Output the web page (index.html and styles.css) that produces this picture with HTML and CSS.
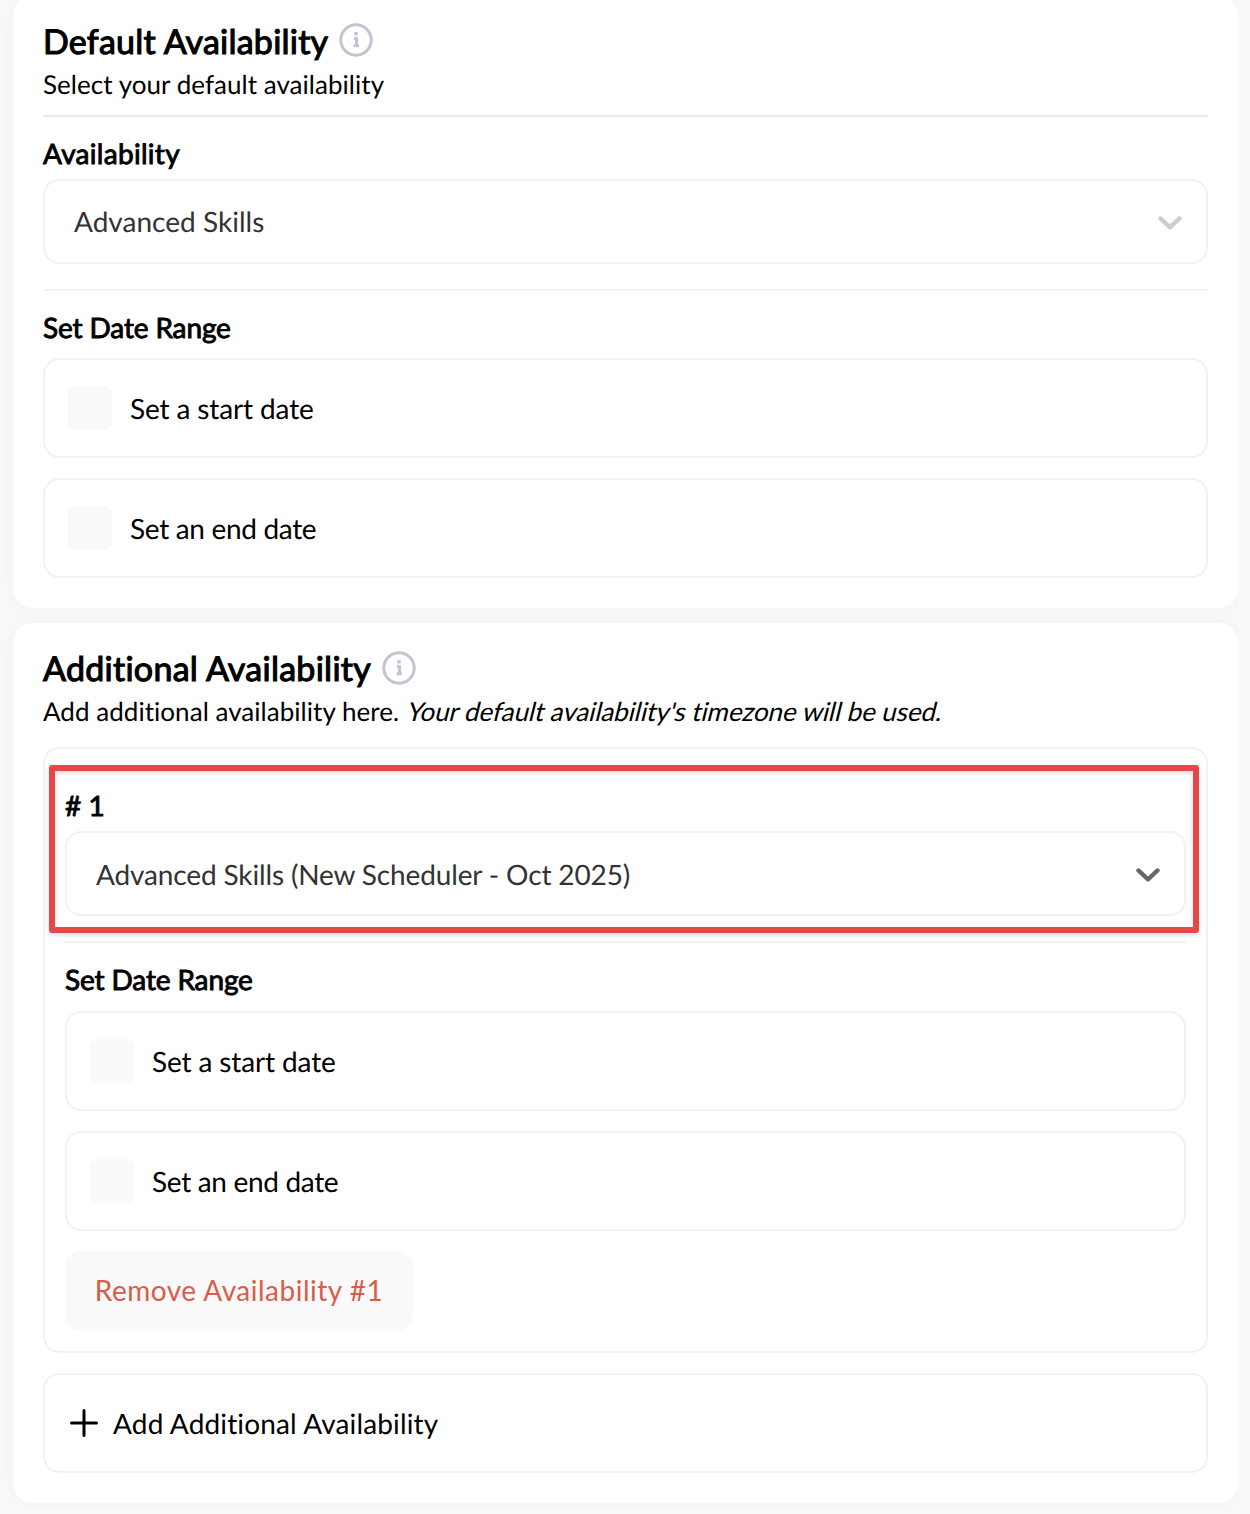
FILE: index.html
```html
<!DOCTYPE html>
<html lang="en">
<head>
<meta charset="utf-8">
<title>Availability</title>
<link rel="stylesheet" href="styles.css">
</head>
<body>
<main class="page">
  <section class="card card-default">
    <header class="card-head">
      <h2 class="title">Default Availability</h2>
      <svg class="info" viewBox="0 0 34 34"><circle cx="17" cy="17" r="15.2"/><path d="M14.9 15.4h2.7v7.2M14.6 22.7h5.4"/><circle class="dot" cx="17" cy="10.7" r="2"/></svg>
    </header>
    <p class="subtitle">Select your default availability</p>
    <hr class="rule rule-head">
    <h3 class="label label-first">Availability</h3>
    <div class="select select-default">
      <span>Advanced Skills</span>
      <svg class="chevron chevron-muted" viewBox="0 0 24 14"><path d="M2.4 2.4 12 11.4l9.6-9"/></svg>
    </div>
    <hr class="rule">
    <h3 class="label label-range">Set Date Range</h3>
    <div class="options">
      <label class="option option-start"><span class="box"></span>Set a start date</label>
      <label class="option"><span class="box"></span>Set an end date</label>
    </div>
  </section>

  <section class="card">
    <header class="card-head card-head-additional">
      <h2 class="title">Additional Availability</h2>
      <svg class="info" viewBox="0 0 34 34"><circle cx="17" cy="17" r="15.2"/><path d="M14.9 15.4h2.7v7.2M14.6 22.7h5.4"/><circle class="dot" cx="17" cy="10.7" r="2"/></svg>
    </header>
    <p class="subtitle">Add additional availability here. <em class="note">Your default availability's timezone will be used.</em></p>
    <div class="entry">
      <div class="highlight"></div>
      <h3 class="label">#&nbsp;1</h3>
      <div class="select">
        <span>Advanced Skills (New Scheduler - Oct 2025)</span>
        <svg class="chevron" viewBox="0 0 24 14"><path d="M2.4 2.4 12 11.4l9.6-9"/></svg>
      </div>
      <hr class="rule">
      <h3 class="label label-range">Set Date Range</h3>
      <div class="options">
        <label class="option option-start"><span class="box"></span>Set a start date</label>
        <label class="option"><span class="box"></span>Set an end date</label>
      </div>
      <button class="remove">Remove Availability #1</button>
    </div>
    <div class="add">
      <svg class="plus" viewBox="0 0 28 28"><path d="M14 1.5v25M1.5 14h25"/></svg>
      <span>Add Additional Availability</span>
    </div>
  </section>
</main>
</body>
</html>
```

FILE: styles.css
```css
* { box-sizing: border-box; }

body {
  margin: 0;
  background: #f9f9f9;
  color: #000;
  font: 28px/36px Lato, sans-serif;
  font-variant-ligatures: none;
  text-rendering: geometricPrecision;
}

h2, h3, p { margin: 0; }

.page {
  display: flex;
  flex-direction: column;
  gap: 15px;
  width: 1238px;
  height: 1514px;
  padding-left: 13px;
  overflow: hidden;
}

.card {
  flex: none;
  padding: 24px 30px 30px;
  background: #fff;
  border-radius: 20px;
  box-shadow: 0 0 16px rgba(0, 0, 0, 0.04);
}

.card-default { margin-top: -4px; }

.card-head {
  display: flex;
  gap: 11px;
  height: 43px;
}

.title {
  font-size: 34px;
  font-weight: 400;
  line-height: 44px;
  letter-spacing: 0.23px;
  -webkit-text-stroke: 1.1px #000;
}

.info {
  width: 34px;
  height: 34px;
  margin-top: 3px;
  fill: none;
  stroke: #c3c4d2;
  stroke-width: 3;
}

.info .dot { fill: #c3c4d2; stroke: none; }

.card-head-additional .title { letter-spacing: 0.27px; }
.card-head-additional .info { margin-top: 4px; }

.subtitle {
  padding-bottom: 1px;
  font-size: 26px;
  line-height: 42px;
  letter-spacing: 0.04px;
}

/* Slanted roman letterforms instead of the italic cut */
.note {
  display: inline-block;
  font-style: normal;
  letter-spacing: -0.1px;
  transform: skewX(-14deg);
  transform-origin: 0 30px;
}

.rule {
  height: 2px;
  margin: 25px 0 18px;
  border: 0;
  background: #f2f2f2;
}

.rule-head {
  margin-top: 9px;
  background: #e8e8ee;
}

.label {
  margin-bottom: 8px;
  font-size: 28px;
  font-weight: 400;
  line-height: 36px;
  -webkit-text-stroke: 0.9px #000;
}

.label-first { letter-spacing: 0.3px; }

.label-range {
  margin-bottom: 13px;
  letter-spacing: -0.13px;
}
.entry .label-range { margin-bottom: 14px; }

.select {
  display: flex;
  align-items: center;
  justify-content: space-between;
  height: 85px;
  padding: 0 24px 0 29px;
  border: 2px solid #f2f2f2;
  border-radius: 16px;
  color: #333;
  letter-spacing: -0.14px;
}

.select-default { letter-spacing: 0.02px; }
.select-default span { padding-bottom: 2px; }

.chevron {
  width: 24px;
  height: 14px;
  margin-top: 2px;
  fill: none;
  stroke: #666;
  stroke-width: 4.2;
  stroke-linecap: round;
  stroke-linejoin: round;
}

.chevron-muted { stroke: #ccc; }

.options {
  display: flex;
  flex-direction: column;
  gap: 20px;
}

.option {
  display: flex;
  align-items: center;
  gap: 18px;
  height: 100px;
  padding: 0 23px;
  border: 2px solid #f2f2f2;
  border-radius: 16px;
  letter-spacing: -0.32px;
}

.option-start { letter-spacing: -0.13px; }

.box {
  width: 44px;
  height: 44px;
  border-radius: 8px;
  background: #f9f9f9;
}

.entry {
  position: relative;
  height: 606px;
  margin-top: 14px;
  padding: 38px 20px 20px;
  border: 2px solid #f2f2f2;
  border-radius: 16px;
}

/* Callout frame laid over the entry's first field */
.highlight {
  position: absolute;
  top: 16px;
  left: 4px;
  width: 1150px;
  height: 168px;
  border: 6px solid #e5484b;
  border-radius: 3px;
  box-shadow: 0 2px 5px rgba(0, 0, 0, 0.14), inset 0 2px 5px rgba(0, 0, 0, 0.14);
}

.remove {
  display: block;
  width: 348px;
  height: 80px;
  margin-top: 20px;
  padding: 0 0 2px;
  border: 0;
  border-radius: 16px;
  background: #f9f9f9;
  color: #d95c4a;
  font: inherit;
  letter-spacing: 0.5px;
}

.add {
  display: flex;
  align-items: center;
  gap: 15px;
  height: 100px;
  margin-top: 20px;
  padding: 0 25px;
  border: 2px solid #f2f2f2;
  border-radius: 16px;
  letter-spacing: 0.15px;
}

.plus {
  width: 28px;
  height: 28px;
  fill: none;
  stroke: #000;
  stroke-width: 3;
  stroke-linecap: round;
}
```
